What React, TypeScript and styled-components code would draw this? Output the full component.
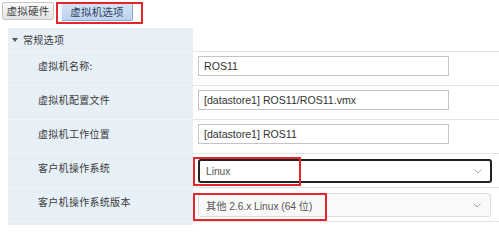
import React from "react";
import styled, { createGlobalStyle } from "styled-components";

const Global = createGlobalStyle`
  html, body { margin: 0; padding: 0; background: #fff; }
  body { font-family: "Liberation Sans", "Noto Sans CJK SC", Arial, sans-serif; font-size: 12px; color: #333; width: 499px; height: 225px; overflow: hidden; }
`;

const Page = styled.div`
  display: flex;
  flex-direction: column;
  width: 499px;
  height: 225px;
  overflow: hidden;
`;

const TabBar = styled.div`
  display: flex;
  align-items: flex-start;
  padding: 2px 0 0 2px;
  height: 29px;
  box-sizing: border-box;
  gap: 7px;
`;

const Tab = styled.div<{ $active?: boolean }>`
  position: relative;
  box-sizing: border-box;
  width: ${(p) => (p.$active ? "72px" : "52px")};
  height: 18px;
  margin-top: ${(p) => (p.$active ? "1px" : "0")};
  display: flex;
  align-items: center;
  justify-content: center;
  font-family: "Noto Sans CJK SC", sans-serif;
  font-size: 10.5px;
  letter-spacing: 0.2px;
  line-height: 14px;
  border-radius: 2px;
  color: ${(p) => (p.$active ? "#2c3f5c" : "#444")};
  border: 1px solid ${(p) => (p.$active ? "#8fa9cc" : "#c6c6c6")};
  border-left-color: ${(p) => (p.$active ? "#eef4fc" : "#c6c6c6")};
  background: ${(p) =>
    p.$active
      ? "linear-gradient(#d4e3f7, #bcd2ef)"
      : "linear-gradient(#fbfbfb, #e2e2e2)"};
`;

const Mark = styled.div<{ $l: number; $t: number; $w: number; $h: number }>`
  position: absolute;
  left: ${(p) => p.$l}px;
  top: ${(p) => p.$t}px;
  width: ${(p) => p.$w}px;
  height: ${(p) => p.$h}px;
  box-sizing: border-box;
  border: 2px solid #e3262c;
  pointer-events: none;
`;

const Panel = styled.div`
  margin-left: 8px;
  display: flex;
  flex-direction: column;
`;

const Row = styled.div<{ $h: number }>`
  display: grid;
  grid-template-columns: 185px 1fr;
  height: ${(p) => p.$h}px;
`;

const LabelCell = styled.div<{ $head?: boolean }>`
  background: #e8f0f7;
  border-bottom: 1px solid #f3f6f9;
  box-sizing: border-box;
  display: flex;
  align-items: ${(p) => (p.$head ? "center" : "flex-start")};
  padding: ${(p) => (p.$head ? "0 0 0 4px" : "7px 0 0 30px")};
  font-family: "Noto Sans CJK SC", sans-serif;
  font-size: 10px;
  letter-spacing: 0.3px;
  line-height: 14px;
  color: #3a3a3a;
`;

const ValueCell = styled.div`
  position: relative;
  border-bottom: 1px solid #e3e3e3;
  box-sizing: border-box;
  padding: 4px 0 0 5px;
`;

const Caret = styled.span`
  display: inline-block;
  width: 0;
  height: 0;
  border-left: 3px solid transparent;
  border-right: 3px solid transparent;
  border-top: 4px solid #555;
  margin-right: 5px;
`;

const Input = styled.div`
  width: 251px;
  height: 20px;
  box-sizing: border-box;
  border: 1px solid #c4c4c4;
  padding: 0 5px;
  display: flex;
  align-items: center;
  font-family: "Liberation Sans", "Noto Sans CJK SC", sans-serif;
  font-size: 10.6px;
  color: #333;
  background: #fff;
`;

const Select = styled.div<{ $focus?: boolean }>`
  width: ${(p) => (p.$focus ? "294px" : "293px")};
  height: 24px;
  margin-top: 1px;
  box-sizing: border-box;
  border: ${(p) => (p.$focus ? "2px solid #222" : "1px solid #dcdcdc")};
  border-radius: 3px;
  padding: ${(p) => (p.$focus ? "0 8px 0 6px" : "0 9px 0 7px")};
  display: flex;
  align-items: center;
  justify-content: space-between;
  font-family: "Liberation Sans", "Noto Sans CJK SC", sans-serif;
  font-size: 10.2px;
  color: #555;
  background: ${(p) => (p.$focus ? "#fff" : "#f9f9f9")};
`;

const Chevron = () => (
  <svg width="8" height="5" viewBox="0 0 8 5">
    <path d="M0.5 0.5 L4 4 L7.5 0.5" fill="none" stroke="#aaa" strokeWidth="1" />
  </svg>
);

const rows = [
  { label: "虚拟机名称:", value: "ROS11" },
  { label: "虚拟机配置文件", value: "[datastore1] ROS11/ROS11.vmx" },
  { label: "虚拟机工作位置", value: "[datastore1] ROS11" },
];

export default function App() {
  return (
    <Page>
      <Global />
      <TabBar>
        <Tab>虚拟硬件</Tab>
        <Tab $active>
          虚拟机选项
          <Mark $l={-6} $t={-2} $w={87} $h={22} />
        </Tab>
      </TabBar>
      <Panel>
        <Row $h={24}>
          <LabelCell $head>
            <Caret />
            常规选项
          </LabelCell>
          <ValueCell />
        </Row>
        {rows.map((r) => (
          <Row $h={34} key={r.label}>
            <LabelCell>{r.label}</LabelCell>
            <ValueCell>
              <Input>{r.value}</Input>
            </ValueCell>
          </Row>
        ))}
        <Row $h={34}>
          <LabelCell>客户机操作系统</LabelCell>
          <ValueCell>
            <Select $focus>
              Linux
              <Chevron />
            </Select>
            <Mark $l={0} $t={3} $w={108} $h={29} />
          </ValueCell>
        </Row>
        <Row $h={34}>
          <LabelCell>客户机操作系统版本</LabelCell>
          <ValueCell>
            <Select>
              其他 2.6.x Linux (64 位)
              <Chevron />
            </Select>
            <Mark $l={0} $t={5} $w={134} $h={28} />
          </ValueCell>
        </Row>
        <Row $h={3}>
          <LabelCell />
          <ValueCell />
        </Row>
      </Panel>
    </Page>
  );
}
